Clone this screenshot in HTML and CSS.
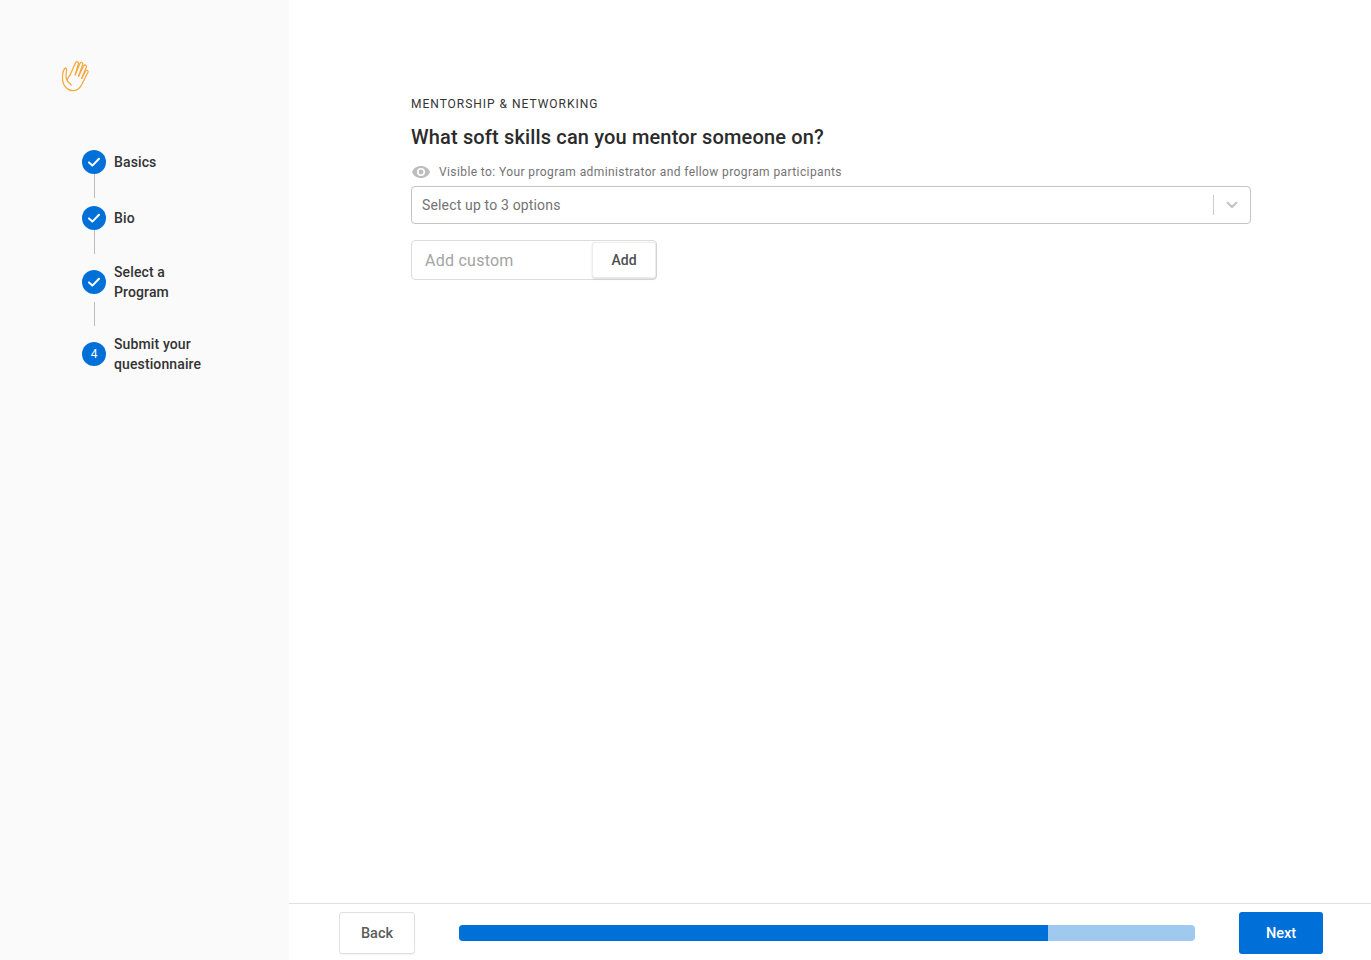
FILE: index.html
```html
<!DOCTYPE html>
<html lang="en">
<head>
<meta charset="utf-8">
<title>Questionnaire</title>
<link rel="stylesheet" href="styles.css">
</head>
<body>
<div class="app">
  <aside class="sidebar">
    <svg class="logo" width="30" height="32" viewBox="0 0 30 32" fill="none" stroke="#f7a83f" stroke-width="1.25" stroke-linecap="round" stroke-linejoin="round">
      <path d="M4.4 8.8 C3 11 2.2 15 2.6 20 C3 26 8 31 13.6 30.6 C18 30.3 20.6 27.4 22 24 L28 12.2 C28.6 10.6 26.6 9.6 25.7 11 L21.6 18.4"/>
      <path d="M21.6 18.4 L26.4 7 C27 5.2 24.6 4.2 23.7 5.8 L18.6 16.2"/>
      <path d="M18.6 16.2 L22.8 4.2 C23.3 2.3 20.8 1.6 20 3.3 L15.2 14.8"/>
      <path d="M15.2 14.8 L18.4 3.6 C18.9 1.7 16.4 1 15.5 2.8 L10 15.2"/>
      <path d="M10 15.2 L8.2 17.4 C7.2 19 7 20.4 7.8 21.6 L11.2 25"/>
      <path d="M4.4 8.8 C5.2 7.6 6.8 8 6.6 9.6 L6 15.6 C5.9 18.2 6.4 20.2 7.8 21.6"/>
    </svg>
    <ol class="steps">
      <li class="step">
        <div class="marker">
          <span class="dot"><svg width="14" height="12" viewBox="0 0 14 12" fill="none" stroke="#fff" stroke-width="2" stroke-linecap="round" stroke-linejoin="round"><path d="M2 6.4 L5.4 9.6 L12 2.8"/></svg></span>
          <span class="line"></span>
        </div>
        <span class="label">Basics</span>
      </li>
      <li class="step">
        <div class="marker">
          <span class="dot"><svg width="14" height="12" viewBox="0 0 14 12" fill="none" stroke="#fff" stroke-width="2" stroke-linecap="round" stroke-linejoin="round"><path d="M2 6.4 L5.4 9.6 L12 2.8"/></svg></span>
          <span class="line"></span>
        </div>
        <span class="label">Bio</span>
      </li>
      <li class="step step-tall">
        <div class="marker">
          <span class="dot"><svg width="14" height="12" viewBox="0 0 14 12" fill="none" stroke="#fff" stroke-width="2" stroke-linecap="round" stroke-linejoin="round"><path d="M2 6.4 L5.4 9.6 L12 2.8"/></svg></span>
          <span class="line"></span>
        </div>
        <span class="label">Select a<br>Program</span>
      </li>
      <li class="step step-last">
        <div class="marker">
          <span class="dot num">4</span>
        </div>
        <span class="label">Submit your<br>questionnaire</span>
      </li>
    </ol>
  </aside>
  <main class="main">
    <section class="content">
      <div class="eyebrow">MENTORSHIP &amp; NETWORKING</div>
      <h1 class="question">What soft skills can you mentor someone on?</h1>
      <div class="visibility">
        <svg width="20" height="14" viewBox="0 0 20 14"><path fill="#bdbdbd" fill-rule="evenodd" d="M10 1 C5.6 1 2.2 3.6 1 7 C2.2 10.4 5.6 13 10 13 C14.4 13 17.8 10.4 19 7 C17.8 3.6 14.4 1 10 1 Z M10 3 A4 4 0 1 1 10 11 A4 4 0 1 1 10 3 Z"/><circle cx="10" cy="7" r="2.4" fill="#bdbdbd"/></svg>
        <span>Visible to: Your program administrator and fellow program participants</span>
      </div>
      <div class="select">
        <span class="select-text">Select up to 3 options</span>
        <span class="select-sep"></span>
        <span class="select-arrow"><svg width="12" height="8" viewBox="0 0 12 8" fill="none" stroke="#c4c4c4" stroke-width="2.2" stroke-linecap="round" stroke-linejoin="round"><path d="M1.6 1.8 L6 6 L10.4 1.8"/></svg></span>
      </div>
      <div class="custom">
        <span class="custom-input">Add custom</span>
        <button class="custom-btn" type="button">Add</button>
      </div>
    </section>
    <footer class="footer">
      <button class="btn btn-back" type="button">Back</button>
      <div class="progress"><div class="progress-fill"></div></div>
      <button class="btn btn-next" type="button">Next</button>
    </footer>
  </main>
</div>
</body>
</html>
```
FILE: styles.css
```css
* { box-sizing: border-box; }
html, body { margin: 0; height: 100%; }
body { font-family: Roboto, "Liberation Sans", sans-serif; color: #262626; background: #fff; overflow: hidden; }
.app { display: flex; height: 960px; }
.sidebar { width: 289px; flex: none; background: #fafafa; padding: 60px 0 0 60px; }
.logo { display: block; }
.steps { list-style: none; margin: 0; padding: 0 0 0 22px; margin-top: 58px; }
.step { display: flex; height: 56px; }
.step-tall { height: 72px; padding-top: 8px; }
.marker { width: 24px; display: flex; flex-direction: column; align-items: center; flex: none; }
.dot { width: 24px; height: 24px; border-radius: 50%; background: #0070d9; display: flex; align-items: center; justify-content: center; flex: none; color: #fff; }
.num { font-size: 12px; }
.line { width: 1px; height: 24px; background: #bdbdbd; }
.step-tall .line { margin-top: 8px; }
.label { margin-left: 8px; font-size: 14px; font-weight: 500; line-height: 20px; letter-spacing: 0.12px; color: #333; padding-top: 2px; }
.step-tall .label { margin-top: -8px; padding-top: 0; }
.step-last { padding-top: 8px; }
.step-last .label { margin-top: -8px; padding-top: 0; }
.main { flex: 1; display: flex; flex-direction: column; min-width: 0; }
.content { flex: 1; padding: 97px 120px 0 122px; }
.eyebrow { font-size: 12px; line-height: 14px; letter-spacing: 0.98px; color: #333; }
.question { margin: 12px 0 0; font-size: 20px; font-weight: 500; line-height: 28px; letter-spacing: 0.15px; color: #2b2b2b; }
.visibility { display: flex; align-items: center; margin-top: 12px; height: 18px; font-size: 12px; letter-spacing: 0.4px; color: #737373; }
.visibility svg { flex: none; margin-right: 8px; }
.select { display: flex; align-items: center; height: 38px; margin-top: 5px; border: 1px solid #c4c4c4; border-radius: 4px; padding-left: 10px; background: #fff; }
.select-text { flex: 1; font-size: 14px; letter-spacing: 0.16px; color: #737373; }
.select-sep { width: 1px; height: 20px; background: #ccc; }
.select-arrow { width: 36px; display: flex; justify-content: center; align-items: center; }
.custom { display: flex; width: 246px; height: 40px; margin-top: 16px; border: 1px solid #dcdcdc; border-radius: 4px; }
.custom-input { flex: 1; padding-left: 13px; font-size: 16px; line-height: 40px; letter-spacing: 0.25px; color: #a3a3a3; }
.custom-btn { width: 64px; height: 36px; padding: 0; margin: 1px 0 0; border: 1px solid #ececec; border-radius: 3px; background: #fff; box-shadow: 0 1px 2px rgba(0,0,0,.15); font: 500 14px Roboto, "Liberation Sans", sans-serif; color: #4f4f4f; }
.footer { display: flex; align-items: center; height: 57px; flex: none; border-top: 1px solid #e0e0e0; padding: 2px 48px 0 50px; }
.btn { height: 42px; border-radius: 3px; font: 500 14.5px Roboto, "Liberation Sans", sans-serif; padding: 0; flex: none; }
.btn-back { width: 76px; background: #fff; border: 1px solid #e0e0e0; color: #5c5c5c; box-shadow: 0 1px 1px rgba(0,0,0,.05); }
.btn-next { width: 84px; background: #0070d9; border: 0; color: #fff; }
.progress { flex: 1; height: 16px; margin: 0 44px; background: #9fc9ef; border-radius: 4px; overflow: hidden; }
.progress-fill { width: 80%; height: 100%; background: #0070d9; }
```
